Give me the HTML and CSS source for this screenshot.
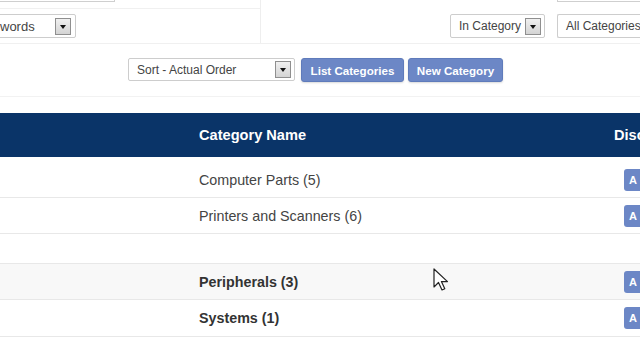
FILE: index.html
```html
<!DOCTYPE html>
<html>
<head>
<meta charset="utf-8">
<link rel="stylesheet" href="styles.css">
</head>
<body>
<div class="page">
  <div class="filters">
    <div class="fcol fleft">
      <div class="strip"><div class="stub stub-l"></div></div>
      <div class="frow">
        <div class="sel sel-kw"><span class="seltext">words</span><i class="arr"></i></div>
      </div>
    </div>
    <div class="fcol fright">
      <div class="strip strip-r"><div class="stub stub-r"></div></div>
      <div class="frow frow-end">
        <div class="sel sel-cat"><span class="seltext">In Category</span><i class="arr"></i></div>
        <div class="sel sel-all"><span class="seltext">All Categories</span></div>
      </div>
    </div>
  </div>

  <div class="actions">
    <div class="sel sel-sort"><span class="seltext">Sort - Actual Order</span><i class="arr"></i></div>
    <button class="btn btn-list">List Categories</button>
    <button class="btn btn-new">New Category</button>
  </div>

  <div class="table">
    <div class="thead">
      <div class="c1"></div>
      <div class="c2">Category Name</div>
      <div class="c3">Disc</div>
    </div>
    <div class="trow r1">
      <div class="c1"></div>
      <div class="c2">Computer Parts (5)</div>
      <div class="c3"><span class="abtn">A</span></div>
    </div>
    <div class="trow r2">
      <div class="c1"></div>
      <div class="c2">Printers and Scanners (6)</div>
      <div class="c3"><span class="abtn">A</span></div>
    </div>
    <div class="trow r3"></div>
    <div class="trow r4 shade">
      <div class="c1"></div>
      <div class="c2 bold">Peripherals (3)</div>
      <div class="c3"><span class="abtn">A</span></div>
    </div>
    <div class="trow r5">
      <div class="c1"></div>
      <div class="c2 bold">Systems (1)</div>
      <div class="c3"><span class="abtn">A</span></div>
    </div>
  </div>

  <svg class="cursor" width="16" height="24" viewBox="0 0 16 24">
    <path d="M1 1 L1 19 L5.5 14.5 L9 22 L11.8 20.8 L8.4 13.6 L14.5 13.6 Z" fill="#fff" stroke="#222" stroke-width="1.2" stroke-linejoin="round"/>
  </svg>
</div>
</body>
</html>
```

FILE: styles.css
```css
* { box-sizing: border-box; }
html, body { margin: 0; padding: 0; }
body {
  width: 640px;
  height: 360px;
  overflow: hidden;
  background: #fff;
  font-family: "Liberation Sans", Arial, sans-serif;
  color: #444;
}
.page { position: relative; width: 640px; height: 360px; overflow: hidden; }

.filters {
  display: flex;
  height: 44px;
  border-bottom: 1px solid #f0f0f0;
}
.fcol { display: flex; flex-direction: column; }
.fleft { flex: none; width: 261px; border-right: 1px solid #eeeeee; }
.fright { flex: 1; min-width: 0; }
.strip { height: 9px; border-bottom: 1px solid #f0f0f0; }
.strip-r { border-bottom: none; }
.stub {
  flex: none;
  height: 2px;
  border: 1px solid #cfcfcf;
  border-top: none;
  background: #fff;
}
.stub-l { width: 117px; margin-left: -2px; }
.stub-r { width: 90px; margin-left: 296px; }
.frow { display: flex; padding-top: 5px; }
.frow-end { padding-left: 189px; gap: 12px; }

.sel {
  flex: none;
  display: flex;
  align-items: center;
  height: 24px;
  border: 1px solid #cdcdcd;
  border-radius: 2px;
  background: #fff;
  font-size: 12px;
  color: #444;
}
.seltext { white-space: nowrap; }
.arr {
  display: block;
  width: 16px;
  height: 17px;
  border: 1px solid #8f8f8f;
  background: linear-gradient(#f0f0f0, #d4d4d4);
  position: relative;
  flex: none;
}
.arr::after {
  content: "";
  position: absolute;
  left: 4px;
  top: 6px;
  border-left: 3.5px solid transparent;
  border-right: 3.5px solid transparent;
  border-top: 4px solid #111;
}
.sel-kw { width: 79px; margin-left: -3px; padding-left: 2px; justify-content: space-between; padding-right: 4px; font-size: 13px; }
.sel-cat { width: 95px; padding-left: 8px; justify-content: space-between; padding-right: 3px; }
.sel-all { width: 100px; padding-left: 8px; border-right: none; }

.actions {
  display: flex;
  align-items: flex-start;
  gap: 6px;
  height: 53px;
  padding-top: 14px;
  padding-left: 128px;
  border-bottom: 1px solid #f2f2f2;
}
.sel-sort { width: 167px; height: 23px; padding-left: 8px; padding-right: 3px; justify-content: space-between; }
.btn {
  flex: none;
  height: 24px;
  border: 1px solid #5f7bbb;
  border-radius: 3px;
  background: #6c87c6;
  color: #fff;
  font-family: "Liberation Sans", Arial, sans-serif;
  font-weight: bold;
  font-size: 11.6px;
  padding: 0;
  box-shadow: 0 1px 2px rgba(0,0,0,0.15);
}
.btn-list { width: 103px; }
.btn-new { width: 95px; margin-left: -2px; }

.table { margin-top: 16px; }
.thead, .trow {
  display: grid;
  grid-template-columns: 199px 415px 26px;
  align-items: center;
}
.thead {
  height: 44px;
  background: #0a3468;
  color: #fff;
  font-weight: bold;
  font-size: 14.6px;
}
.trow {
  border-bottom: 1px solid #e8e8e8;
  font-size: 14.3px;
  color: #444;
}
.r1 { height: 41px; padding-top: 6px; }
.r2 { height: 36px; }
.r3 { height: 30px; }
.r4 { height: 36px; }
.r5 { height: 37px; }
.shade { background: #f8f8f8; }
.bold { font-weight: bold; color: #333; }
.c3 { white-space: nowrap; }
.abtn {
  display: inline-block;
  margin-left: 10px;
  width: 24px;
  height: 22px;
  line-height: 22px;
  border-radius: 3px;
  background: #6c87c6;
  color: #fff;
  font-weight: bold;
  font-size: 11px;
  padding-left: 5px;
}

.cursor { position: absolute; left: 433px; top: 268px; }
```
